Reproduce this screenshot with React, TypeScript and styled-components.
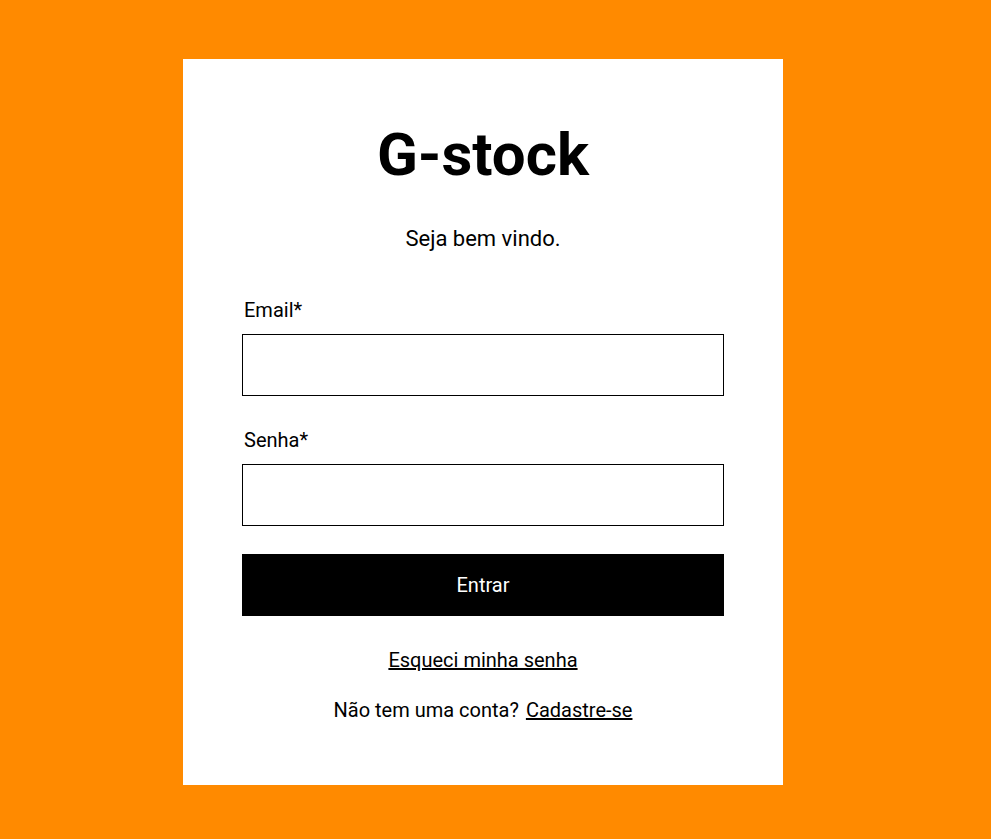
import React from "react";
import styled, { createGlobalStyle } from "styled-components";

const GlobalStyle = createGlobalStyle`
  * {
    box-sizing: border-box;
  }

  body {
    margin: 0;
    background: #ff8a00;
    font-family: Roboto, "Liberation Sans", Arial, sans-serif;
    color: #000;
  }
`;

const App: React.FC = () => {
  return (
    <>
      <GlobalStyle />
      <Page>
        <Card>
          <Title>G-stock</Title>
          <Subtitle>Seja bem vindo.</Subtitle>
          <Form onSubmit={(e) => e.preventDefault()}>
            <Field>
              <Label htmlFor="email">Email*</Label>
              <Input id="email" type="email" />
            </Field>
            <Field $spaced>
              <Label htmlFor="senha">Senha*</Label>
              <Input id="senha" type="password" />
            </Field>
            <SubmitButton type="submit">Entrar</SubmitButton>
          </Form>
          <Links>
            <TextLink href="#">Esqueci minha senha</TextLink>
            <Line>
              Não tem uma conta?<SignUp href="#">Cadastre-se</SignUp>
            </Line>
          </Links>
        </Card>
      </Page>
    </>
  );
};

const Page = styled.main`
  min-height: 100vh;
  display: flex;
  align-items: flex-start;
  padding: 59px 0 54px 183px;
`;

const Card = styled.section`
  width: 600px;
  background: #fff;
  padding: 66px 59px 63px;
  display: flex;
  flex-direction: column;
  align-items: center;
`;

const Title = styled.h1`
  margin: 0;
  font-size: 60px;
  line-height: 60px;
  font-weight: 700;
`;

const Subtitle = styled.p`
  margin: 41px 0 0;
  font-size: 22px;
  line-height: 26px;
`;

const Form = styled.form`
  width: 100%;
  margin-top: 46px;
  display: flex;
  flex-direction: column;
`;

const Field = styled.div<{ $spaced?: boolean }>`
  display: flex;
  flex-direction: column;
  gap: 12px;
  margin-top: ${({ $spaced }) => ($spaced ? "32px" : "0")};
`;

const Label = styled.label`
  font-size: 20px;
  line-height: 24px;
  padding-left: 2px;
`;

const Input = styled.input`
  width: 100%;
  height: 62px;
  border: 1px solid #000;
  border-radius: 0;
  padding: 0 12px;
  font-family: inherit;
  font-size: 20px;
  outline: none;
`;

const SubmitButton = styled.button`
  margin-top: 28px;
  width: 100%;
  height: 62px;
  border: none;
  border-radius: 0;
  background: #000;
  color: #fff;
  font-family: inherit;
  font-size: 20px;
  line-height: 24px;
  cursor: pointer;
`;

const Links = styled.div`
  margin-top: 32px;
  display: flex;
  flex-direction: column;
  align-items: center;
  gap: 26px;
  font-size: 20px;
  line-height: 24px;
`;

const Line = styled.div`
  display: flex;
  align-items: baseline;
`;

const TextLink = styled.a`
  color: #000;
  text-decoration: underline;
`;

const SignUp = styled(TextLink)`
  margin-left: 7px;
`;

export default App;
